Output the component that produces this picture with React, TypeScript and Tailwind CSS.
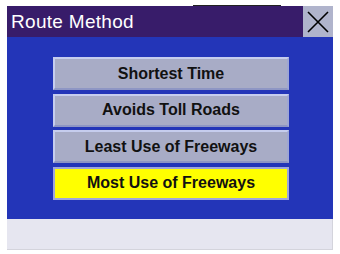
const options = [
  { label: "Shortest Time", selected: false },
  { label: "Avoids Toll Roads", selected: false },
  { label: "Least Use of Freeways", selected: false },
  { label: "Most Use of Freeways", selected: true },
];

export default function App() {
  return (
    <div className="w-[340px] h-[254px] bg-white overflow-hidden" style={{ fontFamily: '"Liberation Sans", Arial, sans-serif' }}>
      <div className="ml-[7px] w-[326px]">
        {/* thin strip above the title bar */}
        <div className="h-[6px] flex">
          <div className="ml-[186px] mt-[5px] w-[88px] h-px bg-[#222]" />
        </div>

        <div className="flex h-[31px]">
          <div className="flex-1 bg-[#381c6a] flex items-center pl-[4px] text-white text-[19px] tracking-[0.3px] leading-none">
            Route Method
          </div>
          <button className="w-[30px] h-[31px] bg-[#b0b4cc] flex items-center justify-center">
            <svg width="24" height="24" viewBox="0 0 24 24">
              <path d="M2 2 L22 22 M22 2 L2 22" stroke="#000" strokeWidth="1.6" />
            </svg>
          </button>
        </div>

        <div className="h-[182px] bg-[#2335b8] pt-[20px]">
          <div className="w-[236px] ml-[46px] flex flex-col gap-[3.6px]">
            {options.map((o) => (
              <button
                key={o.label}
                className={
                  o.selected
                    ? "h-[33px] bg-[#ffff00] border-2 border-[#9ea6dc] text-[16px] font-bold text-[#111] flex items-center justify-center"
                    : "h-[33px] bg-[#a8acc6] border-2 border-t-[#c6cdee] border-l-[#c6cdee] border-b-[#8e96c4] border-r-[#9ea6d4] text-[16px] font-bold text-[#111] flex items-center justify-center"
                }
              >
                {o.label}
              </button>
            ))}
          </div>
        </div>

        <div className="h-[31px] bg-[#e6e6f0] border-r border-b border-[#d4d4dc]" />
      </div>
    </div>
  );
}
